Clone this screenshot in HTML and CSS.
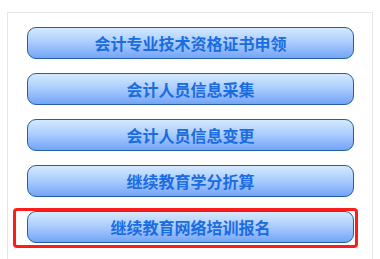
FILE: index.html
```html
<!DOCTYPE HTML>
<html>
	<head>
		<meta http-equiv="Content-Type" content="text/html; charset=UTF-8" />
		<title></title>
		<link rel="stylesheet" href="styles.css">
	</head>
	<body>
		<div class="panel">
			<ul class="menu">
				<li><a class="btn" href="#">会计专业技术资格证书申领</a></li>
				<li><a class="btn" href="#">会计人员信息采集</a></li>
				<li><a class="btn" href="#">会计人员信息变更</a></li>
				<li><a class="btn" href="#">继续教育学分折算</a></li>
				<li class="mark"><a class="btn" href="#">继续教育网络培训报名</a></li>
			</ul>
		</div>
	</body>
</html>
```

FILE: styles.css
```css
html, body {
	height: 100%;
	overflow: hidden;
}
body {
	margin: 0;
	padding: 12px 7px 0 7px;
	box-sizing: border-box;
	background: #fff;
	font-family: "Noto Sans CJK SC", "Microsoft YaHei", sans-serif;
}
.panel {
	box-sizing: border-box;
	height: 100%;
	border: 1px solid #e6e6e6;
	border-bottom: none;
	padding: 14px 18px 0 19px;
}
.menu {
	list-style: none;
	margin: 0;
	padding: 0;
	display: flex;
	flex-direction: column;
	gap: 14px;
}
.btn {
	display: flex;
	justify-content: center;
	align-items: center;
	height: 30px;
	border: 1px solid #24609f;
	border-radius: 9px;
	background: linear-gradient(to bottom, #d3e9ff 0%, #a9cbfd 50%, #74a4f7 100%);
	color: #1b6ce0;
	font-size: 16px;
	font-weight: 700;
	text-decoration: none;
}
.mark {
	margin: -3px -4px 0 -14px;
	padding: 0 1px 2px 11px;
	border: 3px solid #fb1d1d;
	border-radius: 4px;
}
```
